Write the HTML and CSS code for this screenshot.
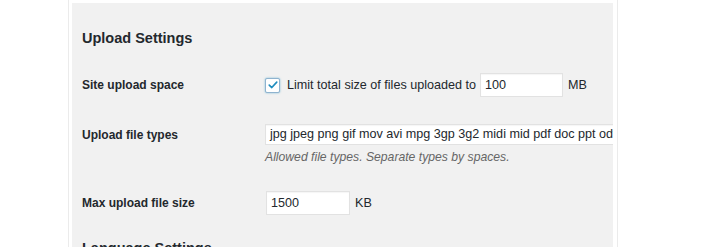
FILE: index.html
```html
<!DOCTYPE html>
<html lang="en">
<head>
<meta charset="utf-8">
<title>Upload Settings</title>
<link rel="stylesheet" href="styles.css">
</head>
<body>
<div class="frame">
  <div class="panel">
    <h2 class="section-title">Upload Settings</h2>
    <div class="row row-space">
      <div class="label">Site upload space</div>
      <div class="field">
        <label class="check">
          <span class="checkbox"><svg viewBox="0 0 16 16" width="12" height="12"><path d="M3 8.2 L6.4 11.4 L13 4.2" fill="none" stroke="#1e8cbe" stroke-width="2.2" stroke-linecap="round" stroke-linejoin="round"/></svg></span>
          <span class="check-text">Limit total size of files uploaded to</span>
        </label>
        <span class="input input-mb">100</span>
        <span class="unit">MB</span>
      </div>
    </div>
    <div class="row row-types">
      <div class="label">Upload file types</div>
      <div class="field field-col">
        <span class="input input-wide">jpg jpeg png gif mov avi mpg 3gp 3g2 midi mid pdf doc ppt odt pptx docx pps ppsx xls xlsx key mp3 ogg flac m4a wav mp4 m4v webm ogv flv</span>
        <p class="desc">Allowed file types. Separate types by spaces.</p>
      </div>
    </div>
    <div class="row row-max">
      <div class="label">Max upload file size</div>
      <div class="field">
        <span class="input input-kb">1500</span>
        <span class="unit">KB</span>
      </div>
    </div>
    <h2 class="section-title next">Language Settings</h2>
  </div>
</div>
</body>
</html>
```
FILE: styles.css
```css
html, body {
  margin: 0;
  padding: 0;
  background: #ffffff;
  height: 247px;
  overflow: hidden;
}
body {
  font-family: "Liberation Sans", Arial, sans-serif;
  color: #23282d;
  font-size: 12.6px;
}
.frame {
  margin-left: 68px;
  width: 541px;
  height: 244px;
  padding: 3px 4px 0 3px;
  border-left: 1px solid #ebebeb;
  border-right: 1px solid #ebebeb;
}
.panel {
  background: #f1f1f1;
  height: 100%;
  padding: 0 0 0 10px;
  overflow: hidden;
}
.section-title {
  margin: 0;
  padding-top: 27px;
  font-size: 14.5px;
  font-weight: 700;
  line-height: 16px;
  color: #23282d;
}
.row {
  display: grid;
  grid-template-columns: 183px 1fr;
  align-items: center;
}
.label {
  font-weight: 700;
  font-size: 12px;
}
.field {
  display: flex;
  align-items: center;
  white-space: nowrap;
}
.field-col {
  flex-direction: column;
  align-items: flex-start;
}
.row-space {
  margin-top: 27px;
  height: 24px;
}
.row-types {
  margin-top: 27px;
  align-items: start;
}
.row-types .label {
  margin-top: 4px;
}
.row-max {
  margin-top: 27px;
  height: 24px;
}
.check {
  display: flex;
  align-items: center;
}
.checkbox {
  width: 13px;
  height: 13px;
  border: 1px solid #8fb3cf;
  background: #fff;
  box-shadow: 0 0 2px rgba(30, 140, 190, 0.6);
  border-radius: 2px;
  display: flex;
  align-items: center;
  justify-content: center;
  margin-right: 7px;
}
.check-text {
  margin-right: 4px;
}
.input {
  display: block;
  box-sizing: border-box;
  background: #fff;
  border: 1px solid #e2e2e2;
  box-shadow: inset 0 1px 1px rgba(0,0,0,0.04);
  padding: 0 4px;
  font-size: 12.6px;
  color: #23282d;
  overflow: hidden;
  white-space: nowrap;
}
.input-mb {
  width: 83px;
  height: 24px;
  line-height: 22px;
}
.input-kb {
  width: 84px;
  height: 24px;
  line-height: 22px;
  margin-left: 1px;
}
.input-wide {
  width: 360px;
  height: 21px;
  line-height: 19px;
  border-right: none;
}
.unit {
  margin-left: 5px;
}
.desc {
  margin: 5px 0 0 0;
  font-style: italic;
  color: #666;
  font-size: 12.2px;
}
.next {
  padding-top: 25px;
}
```
